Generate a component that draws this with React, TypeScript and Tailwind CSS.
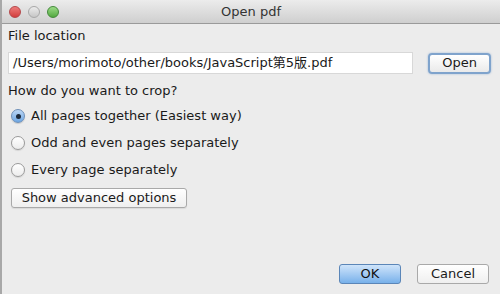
import React from "react";

function Radio({ checked, label }: { checked?: boolean; label: string }) {
  return (
    <div className="flex items-center h-[20px]">
      <div
        className={
          checked
            ? "w-[14px] h-[14px] rounded-full border border-[#6d8fb8] bg-gradient-to-b from-[#bcd6f3] to-[#6ea7e3] flex items-center justify-center shadow-[0_1px_1px_rgba(0,0,0,0.15)]"
            : "w-[14px] h-[14px] rounded-full border border-[#9a9a9a] bg-gradient-to-b from-[#ffffff] to-[#ececec] shadow-[0_1px_1px_rgba(0,0,0,0.1)]"
        }
      >
        {checked && <div className="w-[5px] h-[5px] rounded-full bg-[#1d2a3a]" />}
      </div>
      <span className="ml-[6px] text-[13px] text-[#1a1a1a]">{label}</span>
    </div>
  );
}

export default function App() {
  return (
    <div
      className="w-[500px] h-[294px] bg-[#ececec] flex flex-col overflow-hidden border-l-2 border-[#a8a8a8]"
      style={{ fontFamily: '"Lucida Grande", "DejaVu Sans", "Noto Sans CJK JP", sans-serif' }}
    >
      <div className="relative h-[24px] shrink-0 bg-gradient-to-b from-[#ececec] to-[#cfcfcf] border-b border-[#9a9a9a] flex items-center">
        <div className="flex items-center gap-[7px] pl-[7px]">
          <div className="w-[12px] h-[12px] rounded-full bg-gradient-to-b from-[#ec7a7a] to-[#d23c3c] border border-[#b5474a]" />
          <div className="w-[12px] h-[12px] rounded-full bg-gradient-to-b from-[#ececec] to-[#c6c6c6] border border-[#a8a8a8]" />
          <div className="w-[12px] h-[12px] rounded-full bg-gradient-to-b from-[#9bdb86] to-[#52a93f] border border-[#43893a]" />
        </div>
        <div className="absolute inset-0 flex items-center justify-center text-[13px] text-[#333] pointer-events-none">
          Open pdf
        </div>
      </div>
      <div className="flex-1 flex flex-col pl-[6px] pr-[9px]">
        <div className="mt-[3px] text-[13px] text-[#1a1a1a] h-[18px] leading-[18px]">File location</div>
        <div className="mt-[7px] flex items-center">
          <div className="w-[406px] h-[22px] bg-white border border-[#d8d8d8] flex items-center pl-[4px] text-[13px] text-[#1a1a1a] whitespace-nowrap overflow-hidden">
            /Users/morimoto/other/books/JavaScript第5版.pdf
          </div>
          <div className="ml-[15px] w-[63px] h-[21px] rounded-[4px] border-2 border-[#7fa3cc] bg-gradient-to-b from-[#ffffff] to-[#eaeaea] flex items-center justify-center text-[13px] text-[#1a1a1a] shadow-[0_0_2px_rgba(90,140,200,0.6)]">
            Open
          </div>
        </div>
        <div className="mt-[8px] text-[13px] text-[#1a1a1a] h-[18px] leading-[18px]">How do you want to crop?</div>
        <div className="mt-[6px] ml-[3px] flex flex-col gap-[7px]">
          <Radio checked label="All pages together (Easiest way)" />
          <Radio label="Odd and even pages separately" />
          <Radio label="Every page separately" />
        </div>
        <div className="mt-[8px] ml-[3px] w-[176px] h-[20px] rounded-[3px] border border-[#a9a9a9] bg-gradient-to-b from-[#ffffff] to-[#efefef] flex items-center justify-center text-[13px] text-[#1a1a1a] shadow-[0_1px_1px_rgba(0,0,0,0.08)]">
          Show advanced options
        </div>
        <div className="flex-1" />
        <div className="flex justify-end items-center gap-[16px] mb-[10px] pr-[2px]">
          <div className="w-[62px] h-[20px] rounded-[3px] border border-[#5b86b8] bg-gradient-to-b from-[#cfe4fa] to-[#78b1ea] flex items-center justify-center text-[13px] text-[#111]">
            OK
          </div>
          <div className="w-[72px] h-[20px] rounded-[3px] border border-[#a9a9a9] bg-gradient-to-b from-[#ffffff] to-[#efefef] flex items-center justify-center text-[13px] text-[#1a1a1a]">
            Cancel
          </div>
        </div>
      </div>
    </div>
  );
}
